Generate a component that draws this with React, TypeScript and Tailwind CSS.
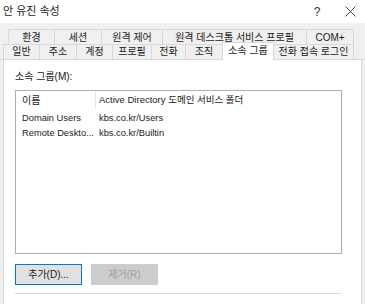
import React from 'react'

const topTabs = [
  { label: '환경', w: 'w-[47px]' },
  { label: '세션', w: 'w-[48px]' },
  { label: '원격 제어', w: 'w-[62px]' },
  { label: '원격 데스크톱 서비스 프로필', w: 'w-[145px]' },
  { label: 'COM+', w: 'w-[48px]' },
]

const bottomTabs = [
  { label: '일반', w: 'w-[37px]' },
  { label: '주소', w: 'w-[38px]' },
  { label: '계정', w: 'w-[37px]' },
  { label: '프로필', w: 'w-[40px]' },
  { label: '전화', w: 'w-[35px]' },
  { label: '조직', w: 'w-[38px]' },
  { label: '소속 그룹', w: 'w-[52px]', active: true },
  { label: '전화 접속 로그인', w: 'w-[81px]' },
]

const groups = [
  { name: 'Domain Users', folder: 'kbs.co.kr/Users' },
  { name: 'Remote Deskto...', folder: 'kbs.co.kr/Builtin' },
]

export default function App() {
  return (
    <div
      className="w-[365px] h-[304px] overflow-hidden bg-[#f0f0f0] text-[10px] text-[#1a1a1a]"
      style={{ fontFamily: '"Liberation Sans", "Noto Sans CJK KR", sans-serif' }}
    >
      {/* title bar */}
      <div className="h-[23px] bg-white flex items-center pl-[3px] pr-[8px]">
        <span className="flex-1 leading-none text-[11px]">안 유진 속성</span>
        <span className="w-[14px] text-center text-[12px] leading-none mr-[21px] text-[#333]">?</span>
        <svg width="11" height="11" viewBox="0 0 11 11" className="mr-[1px]">
          <path d="M0.5 0.5 L10.5 10.5 M10.5 0.5 L0.5 10.5" stroke="#444" strokeWidth="1" />
        </svg>
      </div>

      {/* tabs */}
      <div className="pt-[6px]">
        <div className="flex pl-[8px] h-[16px]">
          {topTabs.map((t) => (
            <div
              key={t.label}
              className={`${t.w} border border-b-0 border-[#d9d9d9] -ml-px first:ml-0 flex items-center justify-center leading-none whitespace-nowrap pt-[1px]`}
            >
              {t.label}
            </div>
          ))}
        </div>
        <div className="flex pl-[3px] h-[15px] border-b border-[#d9d9d9] items-end">
          {bottomTabs.map((t) =>
            t.active ? (
              <div
                key={t.label}
                className={`${t.w} h-[18px] -mb-px relative z-10 bg-white border border-b-0 border-[#d9d9d9] -ml-px flex items-start pt-[3px] justify-center leading-none whitespace-nowrap`}
              >
                {t.label}
              </div>
            ) : (
              <div
                key={t.label}
                className={`${t.w} h-[15px] border border-b-0 border-[#d9d9d9] -ml-px first:ml-0 flex items-center justify-center leading-none whitespace-nowrap`}
              >
                {t.label}
              </div>
            ),
          )}
        </div>
      </div>

      {/* panel */}
      <div className="ml-[3px] w-[359px] h-[250px] bg-white border border-t-0 border-[#d9d9d9] px-[11px] pt-[12px]">
        <div className="leading-none mb-[8px]">소속 그룹(M):</div>
        <div className="w-[327px] h-[164px] border border-[#adadad] bg-white">
          <div className="flex h-[19px] items-center">
            <div className="w-[80px] pl-[6px] border-r border-[#e5e5e5] h-[17px] flex items-center">이름</div>
            <div className="pl-[3px] text-[9.5px]">Active Directory 도메인 서비스 폴더</div>
          </div>
          <div className="pt-[1px] text-[9.3px]">
            {groups.map((g) => (
              <div key={g.name} className="flex h-[15px] items-center">
                <div className="w-[80px] pl-[6px] whitespace-nowrap overflow-hidden">{g.name}</div>
                <div className="pl-[3px]">{g.folder}</div>
              </div>
            ))}
          </div>
        </div>
        <div className="flex gap-[9px] mt-[10px]">
          <button className="w-[67px] h-[21px] border border-[#0078d7] bg-[#e1e1e1] flex items-center justify-center leading-none text-[10px]">
            추가(D)...
          </button>
          <button className="w-[67px] h-[21px] border border-[#cccccc] bg-[#cccccc] text-[#a0a0a0] flex items-center justify-center leading-none text-[10px]">
            제거(R)
          </button>
        </div>
        <div className="mt-[8px] w-[326px] border-t border-[#d9d9d9]" />
      </div>
    </div>
  )
}
